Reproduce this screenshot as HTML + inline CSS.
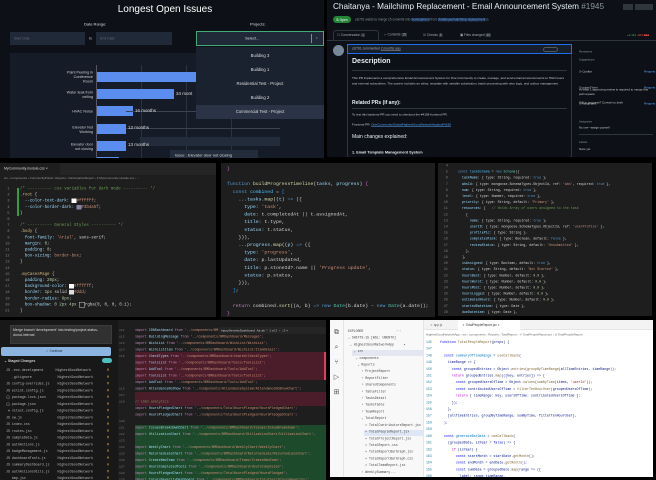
<!DOCTYPE html><html><head><style>
*{margin:0;padding:0;box-sizing:border-box}
body{width:656px;height:480px;background:#000;position:relative;overflow:hidden;font-family:"Liberation Sans",sans-serif}
.p{position:absolute;overflow:hidden}
.a{position:absolute}
.s{position:absolute;transform:scale(.5);transform-origin:0 0;white-space:nowrap}
.m{font-family:"Liberation Mono",monospace;white-space:pre}
</style></head><body>

<!-- Top-left chart -->
<div class="p" style="left:0;top:0;width:324px;height:158px;background:#0d1117">
<div class="a" style="left:0;width:330px;top:4px;text-align:center;color:#fff;font-size:10px">Longest Open Issues</div>
<div class="s" style="left:84px;top:22px;color:#ddd;font-size:8px">Date Range:</div>
<div class="s" style="left:250px;top:22px;color:#ddd;font-size:8px">Projects:</div>
<div class="a" style="left:10px;top:32px;width:75px;height:13px;background:#1f2937"></div>
<div class="s" style="left:14px;top:37px;color:#667;font-size:7px">Start Date</div>
<div class="s" style="left:89px;top:37px;color:#ccc;font-size:7px">to</div>
<div class="a" style="left:96px;top:32px;width:76px;height:13px;background:#1f2937"></div>
<div class="s" style="left:100px;top:37px;color:#667;font-size:7px">End Date</div>
<div class="a" style="left:196px;top:31px;width:128px;height:15px;background:#1f2937;border:1px solid #4a7"></div>
<div class="s" style="left:245px;top:36px;color:#ddd;font-size:8px">Select...</div>
<div class="a" style="left:311px;top:34px;width:1px;height:9px;background:#888"></div>
<div class="s" style="left:315px;top:35px;color:#ccc;font-size:8px">⌄</div>
<div class="a" style="left:10px;top:53px;width:314px;height:105px;background:#151c28"></div>
<div class="a" style="left:96px;top:65px;width:1px;height:93px;background:#556"></div>
<div class="a" style="left:141px;top:65px;width:1px;height:93px;background:#2a3340"></div>
<div class="a" style="left:186px;top:65px;width:1px;height:93px;background:#2a3340"></div>
<div class="a" style="left:231px;top:65px;width:1px;height:93px;background:#2a3340"></div>
<div class="a" style="left:97px;top:72px;width:99px;height:10px;background:#5b8def"></div>
<div class="a" style="left:97px;top:89px;width:77px;height:10px;background:#5b8def"></div>
<div class="a" style="left:97px;top:106px;width:36px;height:10px;background:#5b8def"></div>
<div class="a" style="left:97px;top:124px;width:29px;height:10px;background:#5b8def"></div>
<div class="a" style="left:97px;top:141px;width:29px;height:10px;background:#5b8def"></div>
<div class="a" style="left:97px;top:157px;width:22px;height:3px;background:#5b8def"></div>
<div class="a" style="left:140px;top:137px;width:140px;height:9px;background:#232c3a"></div>
<div class="a" style="left:126px;top:111px;width:154px;height:1px;background:#3a4350"></div>
<div class="a" style="left:126px;top:128px;width:154px;height:1px;background:#3a4350"></div>
<div class="s" style="left:135px;top:108px;color:#ddd;font-size:9px">16 months</div>
<div class="s" style="left:128px;top:125px;color:#ddd;font-size:9px">13 months</div>
<div class="s" style="left:128px;top:142px;color:#ddd;font-size:9px">13 months</div>
<div class="s" style="left:176px;top:91px;color:#ddd;font-size:9px">34 mont</div>
<div class="s" style="left:40px;top:70px;width:106px;text-align:right;color:#ccc;font-size:7.5px;line-height:9px">Paint Peeling in<br>Conference<br>Room</div>
<div class="s" style="left:40px;top:90px;width:106px;text-align:right;color:#ccc;font-size:7.5px;line-height:9px">Water leak from<br>ceiling</div>
<div class="s" style="left:40px;top:109px;width:106px;text-align:right;color:#ccc;font-size:7.5px">HVAC Noise</div>
<div class="s" style="left:40px;top:125px;width:106px;text-align:right;color:#ccc;font-size:7.5px;line-height:9px">Elevator Not<br>Working</div>
<div class="s" style="left:40px;top:142px;width:106px;text-align:right;color:#ccc;font-size:7.5px;line-height:9px">Elevator door<br>not closing</div>
<div class="a" style="left:170px;top:150px;width:88px;height:10px;background:#232c3a"></div>
<div class="s" style="left:175px;top:153px;color:#ddd;font-size:8px">Issue : Elevator door not closing</div>
<div class="a" style="left:196px;top:47px;width:128px;height:72px;background:#1a2230"></div>
<div class="a" style="left:196px;top:105px;width:128px;height:14px;background:#2a3446"></div>
<div class="s" style="left:196px;top:53px;width:256px;text-align:center;color:#ddd;font-size:8.5px">Building 3</div>
<div class="s" style="left:196px;top:67px;width:256px;text-align:center;color:#ddd;font-size:8.5px">Building 1</div>
<div class="s" style="left:196px;top:81px;width:256px;text-align:center;color:#ddd;font-size:8.5px">Residential Test - Project</div>
<div class="s" style="left:196px;top:95px;width:256px;text-align:center;color:#ddd;font-size:8.5px">Building 2</div>
<div class="s" style="left:196px;top:109px;width:256px;text-align:center;color:#ddd;font-size:8.5px">Commercial Test - Project</div>
</div>

<!-- Top-right GitHub -->
<div class="p" style="left:327px;top:0;width:329px;height:157px;background:#0d1117;color:#e6edf3">
<div class="s" style="left:6px;top:2px;font-size:16.4px">Chaitanya - Mailchimp Replacement - Email Announcement System <span style="color:#8b949e">#1945</span></div>
<div class="a" style="left:296px;top:4px;width:10px;height:6px;background:#30363d"></div>
<div class="a" style="left:308px;top:4px;width:18px;height:6px;background:#30363d"></div>
<div class="a" style="left:6px;top:16px;width:18px;height:7px;background:#238636;border-radius:4px"></div>
<div class="s" style="left:9px;top:18px;font-size:6.5px;color:#fff">⇅ Open</div>
<div class="s" style="left:28px;top:18px;font-size:6.4px;color:#8b949e">cst791 wants to merge 15 commits into <span style="color:#58a6ff;background:#1f2c44">development</span> from <span style="color:#58a6ff;background:#1f2c44">chaitanya/mailchimp-replacement</span> ⧉</div>
<div class="a" style="left:6px;top:30px;width:46px;height:11px;border:1px solid #30363d;border-bottom:none;border-radius:3px 3px 0 0;background:#0d1117"></div>
<div class="s" style="left:10px;top:33px;font-size:6.6px;color:#aaa">☐ Conversation <span style="background:#30363d">&nbsp;1&nbsp;</span></div>
<div class="s" style="left:57px;top:33px;font-size:6.6px;color:#aaa">⟜ Commits <span style="background:#30363d">&nbsp;15&nbsp;</span></div>
<div class="s" style="left:96px;top:33px;font-size:6.6px;color:#aaa">☑ Checks <span style="background:#30363d">&nbsp;5&nbsp;</span></div>
<div class="s" style="left:133px;top:33px;font-size:6.6px;color:#aaa">▣ Files changed <span style="background:#30363d">&nbsp;40&nbsp;</span></div>
<div class="s" style="left:300px;top:34px;font-size:6px;color:#3fb950">+4,114 <span style="color:#f85149">-403 ■■■</span></div>
<div class="a" style="left:0;top:40px;width:329px;height:1px;background:#30363d"></div>
<div class="a" style="left:6px;top:45px;width:11px;height:11px;border-radius:50%;background:#789"></div>
<div class="a" style="left:20px;top:44px;width:225px;height:114px;border:1px solid #30363d;border-radius:3px"></div>
<div class="a" style="left:20px;top:44px;width:225px;height:10px;background:#161f2b;border:1px solid #1f6feb"></div>
<div class="s" style="left:25px;top:47px;font-size:6.6px;color:#aaa">cst791 commented <u>2 months ago</u></div>
<div class="a" style="left:216px;top:47px;width:15px;height:5px;border:1px solid #555;border-radius:3px"></div>
<div class="a" style="left:25px;top:58px;font-size:7px;font-weight:bold">Description</div>
<div class="a" style="left:25px;top:70px;width:215px;height:1px;background:#30363d"></div>
<div class="s" style="left:25px;top:76px;width:430px;white-space:normal;font-size:6.2px;line-height:10.8px;color:#ccc">This PR implements a comprehensive Email Announcement System for One Community to create, manage, and send email announcements to HGN users and external subscribers. The system includes an editor, template with variable substitution, batch processing with retry logic, and outbox management.</div>
<div class="a" style="left:25px;top:100px;font-size:5px;font-weight:bold">Related PRs (if any):</div>
<div class="a" style="left:25px;top:108px;width:215px;height:1px;background:#30363d"></div>
<div class="s" style="left:25px;top:113px;font-size:6.2px;color:#ccc">To test this backend PR you need to checkout the #4158 frontend PR.</div>
<div class="s" style="left:25px;top:123px;font-size:6.2px;color:#ccc">Frontend PR: <span style="color:#58a6ff;text-decoration:underline">OneCommunityGlobal/HighestGoodNetworkApp/pull/4158</span></div>
<div class="a" style="left:25px;top:134px;font-size:5px">Main changes explained:</div>
<div class="s" style="left:25px;top:150px;font-size:7.6px;font-weight:bold">1. Email Template Management System</div>
<div class="s" style="left:252px;top:50px;font-size:5.6px;color:#8b949e;line-height:8px">Reviewers<br><br>Suggestions</div>
<div class="s" style="left:252px;top:64px;font-size:6px;color:#ccc;line-height:32px">⊙ Cuellar<br>⊙ pujan7-beri<br>⊙ hangmanz</div>
<div class="s" style="left:317px;top:64px;font-size:6px;color:#58a6ff;line-height:32px">Request<br>Request<br>Request</div>
<div class="s" style="left:252px;top:88px;width:144px;white-space:normal;font-size:6px;color:#ccc;line-height:8.6px">At least 1 approving review is required to merge this pull request.<br><br>Still in progress? Convert to draft</div>
<div class="s" style="left:252px;top:119px;font-size:5.6px;color:#8b949e;line-height:12px">Assignees<br><span style="color:#ccc">No one—assign yourself</span></div>
<div class="a" style="left:252px;top:134px;width:74px;height:1px;background:#30363d"></div>
<div class="s" style="left:252px;top:139px;font-size:5.6px;color:#8b949e;line-height:14px">Labels<br><span style="color:#ccc">None yet</span></div>
</div>

<!-- Row 2 A: CSS -->
<div class="p" style="left:0;top:163px;width:216px;height:154px;background:#1e1e1e">
<div class="a" style="left:0;top:0;width:216px;height:12px;background:#252526"></div>
<div class="a" style="left:0;top:0;width:60px;height:12px;background:#1e1e1e"></div>
<div class="s" style="left:4px;top:4px;font-size:7px;color:#ddd">MyCommunity.module.css ×</div>
<div class="s" style="left:4px;top:14px;font-size:6px;color:#999">src › components › CommunityPortal › Reports › ParticipationReport › # MyCommunity.module.css › ...</div>
<div class="a" style="left:17px;top:25px;width:2px;height:28px;background:#2ea043"></div>
<div class="s m" style="left:3px;top:23px;color:#858585;font-size:7.2px;line-height:12.2px">  1
  2
  3
  4
  5
  6
  7
  8
  9
 10
 11
 12
 13
 14
 15
 16
 17
 18
 19
 20
 21</div>
<div class="s m" style="left:20px;top:23px;color:#d4d4d4;font-size:8.2px;line-height:12.2px"><span style="color:#6a9955">/* ---------- css variables for dark mode ---------- */</span>
<span style="color:#d7ba7d">.root</span> {
  <span style="color:#9cdcfe">--color-text-dark</span>: <span style="background:#fff">  </span><span style="color:#ce9178">#ffffff</span>;
  <span style="color:#9cdcfe">--color-border-dark</span>: <span style="background:#88a">  </span><span style="color:#ce9178">#3b4a5f</span>;
}

<span style="color:#6a9955">/* ---------- General Styles ---------- */</span>
<span style="color:#d7ba7d">.body</span> {
  <span style="color:#9cdcfe">font-family</span>: <span style="color:#ce9178">'Arial'</span>, sans-serif;
  <span style="color:#9cdcfe">margin</span>: <span style="color:#b5cea8">0</span>;
  <span style="color:#9cdcfe">padding</span>: <span style="color:#b5cea8">0</span>;
  <span style="color:#9cdcfe">box-sizing</span>: <span style="color:#ce9178">border-box</span>;
}

<span style="color:#d7ba7d">.myCasesPage</span> {
  <span style="color:#9cdcfe">padding</span>: <span style="color:#b5cea8">20px</span>;
  <span style="color:#9cdcfe">background-color</span>: <span style="background:#fff">  </span><span style="color:#ce9178">#ffffff</span>;
  <span style="color:#9cdcfe">border</span>: <span style="color:#b5cea8">1px</span> solid <span style="background:#ddd">  </span><span style="color:#ce9178">#ddd</span>;
  <span style="color:#9cdcfe">border-radius</span>: <span style="color:#b5cea8">8px</span>;
  <span style="color:#9cdcfe">box-shadow</span>: <span style="color:#b5cea8">0 2px 4px</span> <span style="border:1px solid #ccc">  </span>rgba(0, 0, 0, 0.1);
}</div>
</div>

<!-- Row 2 B: JS -->
<div class="p" style="left:221px;top:163px;width:214px;height:154px;background:#1e1e1e">
<div class="s m" style="left:6px;top:2px;color:#d4d4d4;font-size:9.6px;line-height:15.2px"><span style="color:#da70d6">}</span>

<span style="color:#569cd6">function</span> <span style="color:#dcdcaa">buildProgressTimeline</span>(<span style="color:#9cdcfe">tasks</span>, <span style="color:#9cdcfe">progress</span>) <span style="color:#da70d6">{</span>
  <span style="color:#569cd6">const</span> <span style="color:#4fc1ff">combined</span> = <span style="color:#179fff">[</span>
    ...<span style="color:#9cdcfe">tasks</span>.<span style="color:#dcdcaa">map</span>((<span style="color:#9cdcfe">t</span>) <span style="color:#569cd6">=></span> ({
      <span style="color:#9cdcfe">type</span>: <span style="color:#ce9178">'task'</span>,
      <span style="color:#9cdcfe">date</span>: t.completedAt || t.assignedAt,
      <span style="color:#9cdcfe">title</span>: t.type,
      <span style="color:#9cdcfe">status</span>: t.status,
    })),
    ...<span style="color:#9cdcfe">progress</span>.<span style="color:#dcdcaa">map</span>((<span style="color:#9cdcfe">p</span>) <span style="color:#569cd6">=></span> ({
      <span style="color:#9cdcfe">type</span>: <span style="color:#ce9178">'progress'</span>,
      <span style="color:#9cdcfe">date</span>: p.lastUpdated,
      <span style="color:#9cdcfe">title</span>: p.stoneId?.name || <span style="color:#ce9178">'Progress update'</span>,
      <span style="color:#9cdcfe">status</span>: p.status,
    })),
  <span style="color:#179fff">]</span>;

  <span style="color:#c586c0">return</span> combined.<span style="color:#dcdcaa">sort</span>((a, b) <span style="color:#569cd6">=></span> <span style="color:#569cd6">new</span> <span style="color:#4ec9b0">Date</span>(b.date) - <span style="color:#569cd6">new</span> <span style="color:#4ec9b0">Date</span>(a.date));
<span style="color:#da70d6">}</span></div>
</div>

<!-- Row 2 C: schema -->
<div class="p" style="left:438px;top:163px;width:214px;height:153px;background:#1e1e1e">
<div class="s m" style="left:4px;top:0px;color:#858585;font-size:6.4px;line-height:12.2px">  4
  5
  6
  7
  8
  9
 10
 11
 12
 13
 14
 15
 16
 17
 18
 19
 20
 21
 22
 23
 24
 25
 26
 27
 28
 29</div>
<div class="s m" style="left:20px;top:0px;color:#d4d4d4;font-size:6.6px;line-height:12.2px">
<span style="color:#569cd6">const</span> <span style="color:#4fc1ff">taskSchema</span> = <span style="color:#569cd6">new</span> <span style="color:#4ec9b0">Schema</span>({
  <span style="color:#9cdcfe">taskName</span>: { type: String, required: <span style="color:#569cd6">true</span> },
  <span style="color:#9cdcfe">wbsId</span>: { type: mongoose.SchemaTypes.ObjectId, ref: <span style="color:#ce9178">'wbs'</span>, required: <span style="color:#569cd6">true</span> },
  <span style="color:#9cdcfe">num</span>: { type: String, required: <span style="color:#569cd6">true</span> },
  <span style="color:#9cdcfe">level</span>: { type: Number, required: <span style="color:#569cd6">true</span> },
  <span style="color:#9cdcfe">priority</span>: { type: String, default: <span style="color:#ce9178">'Primary'</span> },
  <span style="color:#9cdcfe">resources</span>: [   <span style="color:#6a9955">// Holds Array of users assigned to the task</span>
    {
      <span style="color:#9cdcfe">name</span>: { type: String, required: <span style="color:#569cd6">true</span> },
      <span style="color:#9cdcfe">userID</span>: { type: mongoose.SchemaTypes.ObjectId, ref: <span style="color:#ce9178">'userProfile'</span> },
      <span style="color:#9cdcfe">profilePic</span>: { type: String },
      <span style="color:#9cdcfe">completedTask</span>: { type: Boolean, default: <span style="color:#569cd6">false</span> },
      <span style="color:#9cdcfe">reviewStatus</span>: { type: String, default: <span style="color:#ce9178">'Unsubmitted'</span> },
    },
  ],
  <span style="color:#9cdcfe">isAssigned</span>: { type: Boolean, default: <span style="color:#569cd6">true</span> },
  <span style="color:#9cdcfe">status</span>: { type: String, default: <span style="color:#ce9178">'Not Started'</span> },
  <span style="color:#9cdcfe">hoursBest</span>: { type: Number, default: <span style="color:#b5cea8">0.0</span> },
  <span style="color:#9cdcfe">hoursWorst</span>: { type: Number, default: <span style="color:#b5cea8">0.0</span> },
  <span style="color:#9cdcfe">hoursMost</span>: { type: Number, default: <span style="color:#b5cea8">0.0</span> },
  <span style="color:#9cdcfe">hoursLogged</span>: { type: Number, default: <span style="color:#b5cea8">0.0</span> },
  <span style="color:#9cdcfe">estimatedHours</span>: { type: Number, default: <span style="color:#b5cea8">0.0</span> },
  <span style="color:#9cdcfe">startedDatetime</span>: { type: Date },
  <span style="color:#9cdcfe">dueDatetime</span>: { type: Date },
  <span style="color:#9cdcfe">links</span>: [String],</div>
</div>

<!-- Row 3 left: git -->
<div class="p" style="left:0;top:320px;width:326px;height:160px;background:#181818">
<div class="a" style="left:10px;top:5px;width:102px;height:19px;background:#313131;border:1px solid #3c3c3c"></div>
<div class="s" style="left:13px;top:8px;width:180px;white-space:normal;font-size:7px;color:#ddd;line-height:10px">Merge branch 'development' into testing/project-status-donut-internal</div>
<div class="a" style="left:1px;top:27px;width:110px;height:9px;background:#8cb4e0;border-radius:2px"></div>
<div class="s" style="left:46px;top:29px;font-size:6.4px;color:#234">✓ Continue</div>
<div class="s" style="left:4px;top:39px;font-size:7px;color:#ccc;font-weight:bold">⌄ Staged Changes</div>
<div class="a" style="left:102px;top:38px;width:10px;height:5px;background:#4dc0c0;border-radius:3px"></div>
<div class="s m" style="left:6px;top:47px;color:#bbb;font-size:6.6px;line-height:13.5px">JS .env.development      HighestGoodNetwork
   .gitignore             HighestGoodNetwork
JS config-overrides.js    HighestGoodNetwork
JS eslint.config.js       HighestGoodNetwork
{} package-lock.json      HighestGoodNetwork
{} package.json           HighestGoodNetwork
 ♦ vitest.config.js       HighestGoodNetwork
JS sw.js                  HighestGoodNetwork
JS index.css              HighestGoodNetwork
JS routes.jsx             HighestGoodNetwork
JS sampleData.js          HighestGoodNetwork
JS authActions.js         HighestGoodNetwork
JS badgeManagement.js     HighestGoodNetwork
JS dashboardTools.js      HighestGoodNetwork
JS summaryDashboard.js    HighestGoodNetwork
JS authActionsUtils.js    HighestGoodNetwork
   bmp.jsx                HighestGoodNetwork</div>
<div class="s m" style="left:107px;top:47px;color:#d7a73a;font-size:6.6px;line-height:13.5px">M
M
M
M
M
M
M
M
M
M
M
M
M
M
A
M
M</div>
<div class="a" style="left:118px;top:0;width:208px;height:160px;background:#1e1e1e"></div>
<div class="a" style="left:135px;top:32px;width:191px;height:28px;background:#4b1c2a"></div>
<div class="a" style="left:135px;top:72px;width:191px;height:14px;background:#4b1c2a"></div>
<div class="a" style="left:135px;top:105px;width:191px;height:55px;background:#1e4a2c"></div>
<div class="a" style="left:324px;top:32px;width:2px;height:28px;background:#e0405a"></div>
<div class="s m" style="left:119px;top:7px;color:#6e7681;font-size:6.2px;line-height:13px">111
112
113
114
115
 
 
 
 
116
117
118
 
 
120
121
122
123
124
125
126
127
128
129
130
131
132</div>
<div class="s m" style="left:135px;top:7px;color:#c586c0;font-size:6.6px;line-height:13px">import <span style="color:#9cdcfe">CDNDashboard</span> from <span style="color:#ce9178">'../components/BMDashboard/CDN'</span>;
import <span style="color:#9cdcfe">BuildingMessage</span> from <span style="color:#ce9178">'../components/BMDashboard/Messages'</span>;
import <span style="color:#9cdcfe">WishList</span> from <span style="color:#ce9178">'../components/BMDashboard/WishList/WishList'</span>;
import <span style="color:#9cdcfe">WishListItem</span> from <span style="color:#ce9178">'../components/BMDashboard/WishList/ItemDetail'</span>;
import <span style="color:#9cdcfe">CheckTypes</span> from <span style="color:#ce9178">'../components/BMDashboard/shared/CheckTypes'</span>;
import <span style="color:#9cdcfe">ToolsList</span> from <span style="color:#ce9178">'../components/BMDashboard/Tools/ToolsList'</span>;
import <span style="color:#9cdcfe">AddTool</span> from <span style="color:#ce9178">'../components/BMDashboard/Tools/AddTool'</span>;
import <span style="color:#9cdcfe">ToolsList</span> from <span style="color:#ce9178">'../components/BMDashboard/Tools/ToolsList'</span>;
import <span style="color:#9cdcfe">AddTool</span> from <span style="color:#ce9178">'../components/BMDashboard/Tools/AddTool'</span>;
import <span style="color:#9cdcfe">AttendanceNoShow</span> from <span style="color:#ce9178">'../components/AttendanceSystem/AttendanceNoShowChart'</span>;

<span style="color:#6a9955">// Lbmn analytics</span>
import <span style="color:#9cdcfe">HoursPledgedChart</span> from <span style="color:#ce9178">'../components/TotalHoursPledged/HoursPledgedChart'</span>;
import <span style="color:#9cdcfe">HoursPledgedChart</span> from <span style="color:#ce9178">'../components/TotalHoursPledged/HoursPledgedChart'</span>;

import <span style="color:#9cdcfe">IssuesBreakdownChart</span> from <span style="color:#ce9178">'../components/BMDashboard/Issues/IssueBreakdown'</span>;
import <span style="color:#9cdcfe">UtilizationChart</span> from <span style="color:#ce9178">'../components/BMDashboard/UtilizationChart/UtilizationChart'</span>;

import <span style="color:#9cdcfe">WeeklyChart</span> from <span style="color:#ce9178">'../components/BMDashboard/WeeklyChart/WeeklyChart'</span>;
import <span style="color:#9cdcfe">ReturnedLateChart</span> from <span style="color:#ce9178">'../components/BMDashboard/ReturnedLate/ReturnedLateChart'</span>;
import <span style="color:#9cdcfe">CreateNewTeam</span> from <span style="color:#ce9178">'../components/BMDashboard/Teams/CreateNewTeam'</span>;
import <span style="color:#9cdcfe">HoursCompletedTools</span> from <span style="color:#ce9178">'../components/BMDashboard/HoursCompleted'</span>;
import <span style="color:#9cdcfe">HoursPledgedChart</span> from <span style="color:#ce9178">'../components/TotalHoursPledged/HoursPledged'</span>;
import <span style="color:#9cdcfe">InjurySeverityDashboard</span> from <span style="color:#ce9178">'../components/BMDashboard/Injuries/InjurySeverity'</span>;

<span style="color:#6a9955">// Community Portal</span>
import <span style="color:#9cdcfe">CPProtectedRoute</span> from <span style="color:#ce9178">'../components/common/CPProtectedRoute'</span>;
import <span style="color:#9cdcfe">CPLogin</span> from <span style="color:#ce9178">'../components/CommunityPortal/Login'</span>;</div>
<div class="a" style="left:218px;top:7px;width:108px;height:7px;background:#252526"></div>
<div class="s" style="left:221px;top:8.5px;font-size:6.2px;color:#ccc">InjurySeverityDashboard &nbsp;Aa ab .* &nbsp;1 of 2 &nbsp;↑ ↓ ≡ ×</div>
</div>

<!-- Row 3 right: VS Code light -->
<div class="p" style="left:330px;top:320px;width:323px;height:157px;background:#fff">
<div class="a" style="left:0;top:0;width:14px;height:157px;background:#f8f8f8;border-right:1px solid #e5e5e5;color:#555;font-size:7px;text-align:center;line-height:15px;padding-top:5px">⧉<br>⌕<br>⑂<br>▷<br>⊞</div>
<div class="a" style="left:14px;top:0;width:80px;height:157px;background:#f8f8f8;border-right:1px solid #e5e5e5"></div>
<div class="a" style="left:22px;top:30px;width:72px;height:6px;background:#e4e6f1"></div>
<div class="a" style="left:34px;top:110px;width:60px;height:6px;background:#dfe7f6"></div>
<div class="s m" style="left:18px;top:8px;color:#444;font-size:6.4px;line-height:13.4px">EXPLORER                 ···
⌄ SHIFTS-15 [WSL: UBUNTU]
 ⌄ HighestGoodNetworkApp     •
   ⌄ src
    ⌄ components
     ⌄ Reports
       › ProjectReport
       › ReportFilter
       › sharedComponents
       › TableFilter
       › TasksDetail
       › TasksTable
       › TeamReport
       ⌄ TotalReport
         ⌗ TotalContributorsReport.jsx
         ⌗ TotalPeopleReport.jsx
         ⌗ TotalProjectReport.jsx
         ⌗ TotalReport.css
         ⌗ TotalReportBarGraph.jsx
         ⌗ TotalReportBarGraph.css
         ⌗ TotalTeamReport.jsx
       › WeeklySummary...
       › WbsTable</div>
<div class="a" style="left:94px;top:0;width:229px;height:10px;background:#f3f3f3;border-bottom:1px solid #e5e5e5"></div>
<div class="a" style="left:128px;top:0;width:62px;height:10px;background:#fff"></div>
<div class="s" style="left:132px;top:3px;font-size:6.4px;color:#333">⚛ TotalPeopleReport.jsx ×</div>
<div class="s" style="left:100px;top:3px;font-size:6.4px;color:#666">⚛ app.js</div>
<div class="s" style="left:96px;top:13px;font-size:6px;color:#666">HighestGoodNetworkApp › src › components › Reports › TotalReport › ⚛ TotalPeopleReport.jsx › ⊙ TotalPeopleReport</div>
<div class="s m" style="left:96px;top:19px;color:#237893;font-size:6.4px;line-height:13.4px">145
147
148
149
150
151
152
153
154
155
156
157
158
159
160
161
162
163
164
165
166
167
168</div>
<div class="s m" style="left:108px;top:19px;color:#001080;font-size:6.6px;line-height:13.4px"> <span style="color:#0000ff">function</span> <span style="color:#795e26">TotalPeopleReport</span>(props) {

   <span style="color:#0000ff">const</span> <span style="color:#0070c1">summaryOfTimeRange</span> = <span style="color:#795e26">useCallback</span>(
     timeRange => {
       <span style="color:#0000ff">const</span> groupedEntries = Object.<span style="color:#795e26">entries</span>(<span style="color:#795e26">groupByTimeRange</span>(allTimeEntries, timeRange));
       <span style="color:#af00db">return</span> groupedEntries.<span style="color:#795e26">map</span>(([key, entries]) => {
         <span style="color:#0000ff">const</span> groupedUsersOfTime = Object.<span style="color:#795e26">values</span>(<span style="color:#795e26">sumByTime</span>(items, <span style="color:#a31515">'userId'</span>));
         <span style="color:#0000ff">const</span> contributedUsersOfTime = <span style="color:#795e26">filterTenHourUser</span>(groupedUsersOfTime);
         <span style="color:#af00db">return</span> { timeRange: key, usersOfTime: contributedUsersOfTime };
       });
     },
     [allTimeEntries, groupByTimeRange, sumByTime, filterTenHourUser],
   );

   <span style="color:#0000ff">const</span> <span style="color:#0070c1">generateBarData</span> = <span style="color:#795e26">useCallback</span>(
     (groupedDate, isYear = <span style="color:#0000ff">false</span>) => {
       <span style="color:#af00db">if</span> (isYear) {
         <span style="color:#0000ff">const</span> startMonth = startDate.<span style="color:#795e26">getMonth</span>();
         <span style="color:#0000ff">const</span> endMonth = endDate.<span style="color:#795e26">getMonth</span>();
         <span style="color:#0000ff">const</span> sumData = groupedDate.<span style="color:#795e26">map</span>(range => ({
           label: range.timeRange,
           value: range.usersOfTime.length,
           months: <span style="color:#098658">12</span>,
         }));
         <span style="color:#af00db">if</span> (sumData.length > <span style="color:#098658">1</span>) {</div>
</div>
</body></html>
